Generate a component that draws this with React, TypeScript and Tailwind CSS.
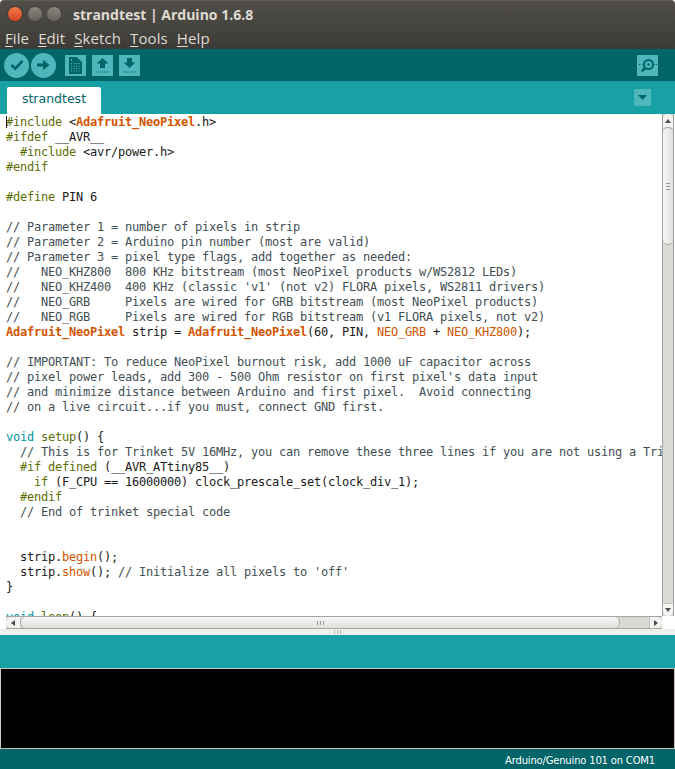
type Kind = "p" | "c" | "o" | "b" | "t" | "d";
type Seg = [string, Kind?];

const tone: Record<Kind, string> = {
  p: "text-[#1a1a1a]",
  c: "text-[#434f54]",
  o: "text-[#5e6d03]",
  b: "text-[#d35400] font-bold",
  t: "text-[#00979c]",
  d: "text-[#d35400]",
};

const code: Seg[][] = [
  [["#include", "o"], [" <"], ["Adafruit_NeoPixel", "b"], [".h>"]],
  [["#ifdef", "o"], [" __AVR__"]],
  [["  "], ["#include", "o"], [" <avr/power.h>"]],
  [["#endif", "o"]],
  [],
  [["#define", "o"], [" PIN 6"]],
  [],
  [["// Parameter 1 = number of pixels in strip", "c"]],
  [["// Parameter 2 = Arduino pin number (most are valid)", "c"]],
  [["// Parameter 3 = pixel type flags, add together as needed:", "c"]],
  [["//   NEO_KHZ800  800 KHz bitstream (most NeoPixel products w/WS2812 LEDs)", "c"]],
  [["//   NEO_KHZ400  400 KHz (classic 'v1' (not v2) FLORA pixels, WS2811 drivers)", "c"]],
  [["//   NEO_GRB     Pixels are wired for GRB bitstream (most NeoPixel products)", "c"]],
  [["//   NEO_RGB     Pixels are wired for RGB bitstream (v1 FLORA pixels, not v2)", "c"]],
  [["Adafruit_NeoPixel", "b"], [" strip = "], ["Adafruit_NeoPixel", "b"], ["(60, PIN, "], ["NEO_GRB", "d"], [" + "], ["NEO_KHZ800", "d"], [");"]],
  [],
  [["// IMPORTANT: To reduce NeoPixel burnout risk, add 1000 uF capacitor across", "c"]],
  [["// pixel power leads, add 300 - 500 Ohm resistor on first pixel's data input", "c"]],
  [["// and minimize distance between Arduino and first pixel.  Avoid connecting", "c"]],
  [["// on a live circuit...if you must, connect GND first.", "c"]],
  [],
  [["void", "t"], [" "], ["setup", "o"], ["() {"]],
  [["  "], ["// This is for Trinket 5V 16MHz, you can remove these three lines if you are not using a Trinket", "c"]],
  [["  "], ["#if", "o"], [" "], ["defined", "o"], [" (__AVR_ATtiny85__)"]],
  [["    "], ["if", "o"], [" (F_CPU == 16000000) clock_prescale_set(clock_div_1);"]],
  [["  "], ["#endif", "o"]],
  [["  "], ["// End of trinket special code", "c"]],
  [],
  [],
  [["  strip."], ["begin", "d"], ["();"]],
  [["  strip."], ["show", "d"], ["(); "], ["// Initialize all pixels to 'off'", "c"]],
  [["}"]],
  [],
  [["void", "t"], [" "], ["loop", "o"], ["() {"]],
];

function Check() {
  return (
    <svg width="14" height="12" viewBox="0 0 14 12" fill="none" stroke="#006468" strokeWidth="2.6">
      <path d="M1.5 6 L5.2 9.6 L12.5 2" />
    </svg>
  );
}

function RightArrow() {
  return (
    <svg width="13" height="12" viewBox="0 0 13 12" fill="#006468">
      <path d="M0 4.5 H6 V0.8 L12.5 6 L6 11.2 V7.5 H0 Z" />
    </svg>
  );
}

function NewDoc() {
  return (
    <svg width="13" height="17" viewBox="0 0 13 17">
      <path d="M0 0 H7.5 L13 5 V17 H0 Z" fill="#006468" />
      <g fill="#4db7bb">
        {[6, 8.5, 11, 13.5].map((y) =>
          [2, 4.5, 7, 9.5].map((x) => <rect key={`${x}-${y}`} x={x} y={y} width="1" height="1" />),
        )}
        <rect x="2" y="2" width="1" height="2" />
      </g>
    </svg>
  );
}

function Upload({ down }: { down?: boolean }) {
  return (
    <svg width="13" height="15" viewBox="0 0 13 15" fill="#006468">
      <path d={down ? "M4 0 H9 V4.5 H12.5 L6.5 10 L0.5 4.5 H4 Z" : "M6.5 0 L12.5 5.5 H9 V10 H4 V5.5 H0.5 Z"} />
      {[0, 2, 4, 6, 8, 10, 12].map((x) => (
        <rect key={x} x={x} y="13.5" width="1" height="1" />
      ))}
    </svg>
  );
}

function Monitor() {
  return (
    <svg width="18" height="15" viewBox="0 0 18 15" fill="none">
      <circle cx="9.5" cy="6.5" r="4.6" stroke="#006468" strokeWidth="2" />
      <circle cx="9.5" cy="6.5" r="1.2" fill="#006468" />
      <path d="M6 10 L2.8 13.4" stroke="#006468" strokeWidth="2.6" />
      <rect x="0" y="6" width="1" height="1" fill="#006468" />
      <rect x="2.2" y="6" width="1" height="1" fill="#006468" />
      <rect x="15.2" y="6" width="1" height="1" fill="#006468" />
      <rect x="17" y="6" width="1" height="1" fill="#006468" />
    </svg>
  );
}

const menu = ["File", "Edit", "Sketch", "Tools", "Help"];

export default function App() {
  return (
    <div className="flex h-[769px] w-[675px] flex-col overflow-hidden bg-white">
      {/* window frame */}
      <header className="h-[49px] shrink-0 rounded-t-[4px] border-t border-[#5e5b54] bg-linear-to-b from-[#514e48] to-[#3c3b37] font-['Open_Sans',sans-serif] text-[#dfdbd2]">
        <div className="flex h-[26px] items-center pl-[7px]">
          <span className="h-[16px] w-[16px] rounded-full border border-[#41392f] bg-linear-to-b from-[#f0784a] to-[#d8451f]" />
          <span className="ml-[4px] h-[16px] w-[16px] rounded-full border border-[#45433e] bg-linear-to-b from-[#8a867e] to-[#66635c]" />
          <span className="ml-[3px] h-[16px] w-[16px] rounded-full border border-[#45433e] bg-linear-to-b from-[#8a867e] to-[#66635c]" />
          <span className="ml-[11px] text-[14px] font-bold">strandtest | Arduino 1.6.8</span>
        </div>
        <nav className="flex h-[22px] items-center gap-[9px] pl-[5px] text-[15px] tracking-[0.1px]">
          {menu.map((item) => (
            <span key={item}>
              <span className="underline underline-offset-2">{item[0]}</span>
              {item.slice(1)}
            </span>
          ))}
        </nav>
      </header>

      {/* toolbar */}
      <div className="flex h-[32px] shrink-0 items-center bg-[#006468] pl-[4px] pr-[17px]">
        <button className="flex h-[25px] w-[25px] items-center justify-center rounded-full bg-[#4db7bb]">
          <Check />
        </button>
        <button className="ml-[2px] flex h-[25px] w-[25px] items-center justify-center rounded-full bg-[#4db7bb]">
          <RightArrow />
        </button>
        <button className="ml-[9px] flex h-[21px] w-[21px] items-center justify-center bg-[#4db7bb]">
          <NewDoc />
        </button>
        <button className="ml-[6px] flex h-[21px] w-[21px] items-center justify-center bg-[#4db7bb]">
          <Upload />
        </button>
        <button className="ml-[6px] flex h-[21px] w-[21px] items-center justify-center bg-[#4db7bb]">
          <Upload down />
        </button>
        <button className="ml-auto flex h-[21px] w-[21px] items-center justify-center bg-[#4db7bb]">
          <Monitor />
        </button>
      </div>

      {/* tabs */}
      <div className="flex h-[33px] shrink-0 items-end bg-[#17a1a5] pl-[7px] pr-[24px]">
        <div className="flex h-[27px] w-[94px] items-center justify-center rounded-t-[2px] bg-white pb-[3px] font-['DejaVu_Sans',sans-serif] text-[12.5px] text-[#006468]">
          strandtest
        </div>
        <button className="mb-[8px] ml-auto flex h-[17px] w-[17px] items-center justify-center bg-[#4db7bb]">
          <svg width="9" height="5" viewBox="0 0 9 5" fill="#006468">
            <path d="M0 0 H9 L4.5 5 Z" />
          </svg>
        </button>
      </div>

      {/* editor */}
      <div className="flex h-[502px] shrink-0">
        <div className="relative min-w-0 flex-1 overflow-hidden pl-[6px] pt-[1px] font-['DejaVu_Sans_Mono',monospace] text-[12px] leading-[15px] tracking-[-0.224px] whitespace-pre">
          <span className="absolute left-[6px] top-[2px] h-[12px] w-[1px] bg-[#1a1a1a]" />
          {code.map((line, i) => (
            <div key={i} className="h-[15px]">
              {line.map(([text, kind], j) => (
                <span key={j} className={tone[kind ?? "p"]}>
                  {text}
                </span>
              ))}
            </div>
          ))}
        </div>
        <div className="mr-[1px] flex w-[12px] shrink-0 flex-col border-x border-[#a5a4a0] bg-[#d9d9d6]">
          <div className="flex h-[13px] shrink-0 items-center justify-center rounded-t-full bg-[#f4f3f1]">
            <span className="h-0 w-0 border-x-[3px] border-b-[4px] border-x-transparent border-b-[#4c4c4c]" />
          </div>
          <div className="flex h-[118px] shrink-0 flex-col items-center justify-center gap-[2px] rounded-full border-y border-[#a5a4a0] bg-linear-to-r from-[#f6f6f5] to-[#e0e0de]">
            <span className="h-[1px] w-[4px] bg-[#9a9a98]" />
            <span className="h-[1px] w-[4px] bg-[#9a9a98]" />
            <span className="h-[1px] w-[4px] bg-[#9a9a98]" />
          </div>
          <div className="flex-1" />
          <div className="flex h-[13px] shrink-0 items-center justify-center rounded-b-full border-t border-[#c4c4c2] bg-[#f4f3f1]">
            <span className="h-0 w-0 border-x-[3px] border-t-[4px] border-x-transparent border-t-[#4c4c4c]" />
          </div>
        </div>
      </div>

      {/* horizontal scrollbar */}
      <div className="flex h-[13px] shrink-0 pl-[6px] pr-[13px]">
        <div className="flex min-w-0 flex-1 border-y border-[#a5a4a0] bg-[#d9d9d6]">
          <div className="flex w-[14px] shrink-0 items-center justify-center rounded-l-full bg-[#f4f3f1]">
            <span className="h-0 w-0 border-y-[3px] border-r-[4px] border-y-transparent border-r-[#4c4c4c]" />
          </div>
          <div className="flex w-[600px] shrink-0 items-center justify-center gap-[2px] rounded-full border-x border-[#a5a4a0] bg-linear-to-b from-[#f6f6f5] to-[#e0e0de]">
            <span className="h-[4px] w-[1px] bg-[#9a9a98]" />
            <span className="h-[4px] w-[1px] bg-[#9a9a98]" />
            <span className="h-[4px] w-[1px] bg-[#9a9a98]" />
          </div>
          <div className="flex-1" />
          <div className="flex w-[13px] shrink-0 items-center justify-center rounded-r-full border-l border-[#c4c4c2] bg-[#f4f3f1]">
            <span className="h-0 w-0 border-y-[3px] border-l-[4px] border-y-transparent border-l-[#4c4c4c]" />
          </div>
        </div>
      </div>

      {/* divider grip */}
      <div className="flex h-[6px] shrink-0 items-center justify-center gap-[2px] bg-[#f0efec]">
        <span className="h-[4px] w-[1px] bg-[#b5b5b2]" />
        <span className="h-[4px] w-[1px] bg-[#b5b5b2]" />
        <span className="h-[4px] w-[1px] bg-[#b5b5b2]" />
      </div>

      {/* message area */}
      <div className="h-[33px] shrink-0 bg-[#17a1a5]" />
      <div className="min-h-0 flex-1 border-y border-r border-l border-[#c8c5bd] bg-black" />

      {/* status */}
      <div className="flex h-[20px] shrink-0 items-center justify-end bg-[#006468] pr-[20px] pt-[2px] font-['DejaVu_Sans',sans-serif] text-[10px] tracking-[-0.18px] text-white">
        Arduino/Genuino 101 on COM1
      </div>
    </div>
  );
}
